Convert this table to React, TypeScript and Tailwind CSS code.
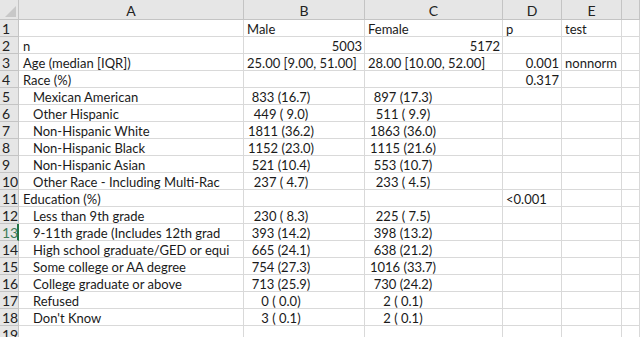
import React from "react";

type Row = {
  a: string;
  indent?: boolean;
  b?: string;
  bMode?: "left" | "right" | "mid";
  c?: string;
  cMode?: "left" | "right" | "mid";
  d?: string;
  dMode?: "left" | "right";
  e?: string;
};

const rows: Row[] = [
  { a: "", b: "Male", bMode: "left", c: "Female", cMode: "left", d: "p", dMode: "left", e: "test" },
  { a: "n", b: "5003", bMode: "right", c: "5172", cMode: "right" },
  {
    a: "Age (median [IQR])",
    b: "25.00 [9.00, 51.00]",
    bMode: "left",
    c: "28.00 [10.00, 52.00]",
    cMode: "left",
    d: "0.001",
    dMode: "right",
    e: "nonnorm",
  },
  { a: "Race (%)", d: "0.317", dMode: "right" },
  { a: "Mexican American", indent: true, b: "833 (16.7)", c: "897 (17.3)" },
  { a: "Other Hispanic", indent: true, b: "449 ( 9.0)", c: "511 ( 9.9)" },
  { a: "Non-Hispanic White", indent: true, b: "1811 (36.2)", c: "1863 (36.0)" },
  { a: "Non-Hispanic Black", indent: true, b: "1152 (23.0)", c: "1115 (21.6)" },
  { a: "Non-Hispanic Asian", indent: true, b: "521 (10.4)", c: "553 (10.7)" },
  { a: "Other Race - Including Multi-Rac", indent: true, b: "237 ( 4.7)", c: "233 ( 4.5)" },
  { a: "Education (%)", d: "<0.001", dMode: "left" },
  { a: "Less than 9th grade", indent: true, b: "230 ( 8.3)", c: "225 ( 7.5)" },
  { a: "9-11th grade (Includes 12th grad", indent: true, b: "393 (14.2)", c: "398 (13.2)" },
  { a: "High school graduate/GED or equi", indent: true, b: "665 (24.1)", c: "638 (21.2)" },
  { a: "Some college or AA degree", indent: true, b: "754 (27.3)", c: "1016 (33.7)" },
  { a: "College graduate or above", indent: true, b: "713 (25.9)", c: "730 (24.2)" },
  { a: "Refused", indent: true, b: "0 ( 0.0)", c: "2 ( 0.1)" },
  { a: "Don't Know", indent: true, b: "3 ( 0.1)", c: "2 ( 0.1)" },
  { a: "" },
];

const cell =
  "h-[17px] border-r border-b border-[#d9d9d9] pt-[1px] leading-[16px] whitespace-pre overflow-visible";

function alignB(mode?: string) {
  if (mode === "left") return "pl-[3px] text-left";
  if (mode === "right") return "pr-[2px] text-right";
  return "pr-[46px] text-center";
}

function alignC(mode?: string) {
  if (mode === "left") return "pl-[3px] text-left";
  if (mode === "right") return "pr-[2px] text-right";
  return "pr-[61px] text-center";
}

const headers = ["A", "B", "C", "D", "E", ""];

export default function App() {
  return (
    <div
      className="h-[337px] w-[640px] overflow-hidden bg-white text-[13px] text-[#1a1a1a]"
      style={{ fontFamily: "Lato, 'Noto Sans', sans-serif" }}
    >
      <div className="grid grid-cols-[19px_225px_121px_138px_59px_60px_1fr]">
        {/* header row */}
        <div className="relative h-[20px] border-r border-b border-[#c4c4c4] bg-[#e6e6e6]">
          <svg className="absolute right-[2px] bottom-[2px]" width="11" height="11" viewBox="0 0 11 11">
            <polygon points="11,0 11,11 0,11" fill="#c8c8c8" />
          </svg>
        </div>
        {headers.map((h, i) => (
          <div
            key={i}
            className="h-[20px] border-r border-b border-[#c4c4c4] bg-[#e6e6e6] pt-[1px] text-center text-[14px] leading-[19px] text-[#222]"
          >
            {h}
          </div>
        ))}

        {rows.map((r, i) => {
          const n = i + 1;
          const active = n === 13;
          return (
            <React.Fragment key={i}>
              <div
                className={
                  "h-[17px] border-b border-[#c4c4c4] bg-[#e6e6e6] pt-[1px] pl-[2px] text-[14px] leading-[16px] " +
                  (active
                    ? "border-r-2 border-r-[#217346] text-[#3f7a57]"
                    : "border-r border-r-[#c4c4c4] text-[#222]")
                }
              >
                {n}
              </div>
              <div className={cell + " " + (r.indent ? "pl-[14px]" : "pl-[4px]")}>{r.a}</div>
              <div className={cell + " " + alignB(r.bMode)}>{r.b}</div>
              <div className={cell + " " + alignC(r.cMode)}>{r.c}</div>
              <div className={cell + " " + (r.dMode === "left" ? "pl-[3px] text-left" : "pr-[2px] text-right")}>
                {r.d}
              </div>
              <div className={cell + " pl-[3px]"}>{r.e}</div>
              <div className={cell}></div>
            </React.Fragment>
          );
        })}
      </div>
    </div>
  );
}
